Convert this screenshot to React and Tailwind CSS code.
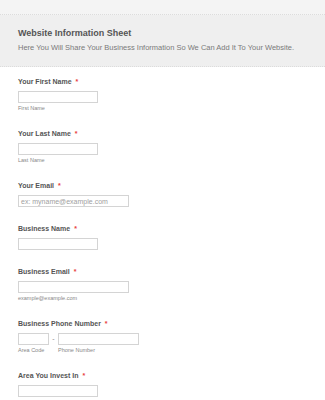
import React from "react";

const fields = [
  { label: "Your First Name", width: "w-[80px]", sub: "First Name" },
  { label: "Your Last Name", width: "w-[80px]", sub: "Last Name" },
  { label: "Your Email", width: "w-[111px]", placeholder: "ex: myname@example.com" },
  { label: "Business Name", width: "w-[80px]" },
  { label: "Business Email", width: "w-[111px]", sub: "example@example.com" },
  { label: "Business Phone Number", phone: true },
  { label: "Area You Invest In", width: "w-[80px]" },
];

function Box({ className, placeholder }) {
  return (
    <div className={`h-[12px] border border-[#d4d4d4] bg-white flex items-center px-[2px] ${className}`}>
      {placeholder && <span className="text-[7px] leading-none text-[#a0a0a0]">{placeholder}</span>}
    </div>
  );
}

export default function App() {
  return (
    <div className="w-[325px] h-[400px] overflow-hidden bg-white font-['Liberation_Sans',Arial,sans-serif]">
      <div className="h-[15px] bg-[#f4f4f4] border-b border-dotted border-[#dcdcdc]" />
      <div className="h-[52px] bg-[#efefef] border-b border-dotted border-[#dcdcdc] px-[18px] pt-[13px]">
        <div className="text-[9px] leading-[11px] font-bold text-[#555]">Website Information Sheet</div>
        <div className="mt-[4px] text-[7.5px] leading-[9px] text-[#7a7a7a]">
          Here You Will Share Your Business Information So We Can Add It To Your Website.
        </div>
      </div>

      <div className="px-[18px] pt-[10px]">
        {fields.map(f => (
          <div key={f.label} className="pb-[17px]">
            <div className="h-[10px] leading-[10px] text-[7px] font-bold text-[#555]">
              {f.label}
              <span className="ml-[4px] text-[#e8413e]">*</span>
            </div>
            {f.phone ? (
              <div className="mt-[4px] flex">
                <div className="flex flex-col">
                  <Box className="w-[31px]" />
                  <span className="mt-[1px] h-[8px] leading-[8px] text-[5.5px] text-[#888]">Area Code</span>
                </div>
                <span className="w-[9px] text-center text-[7px] leading-[12px] text-[#888]">-</span>
                <div className="flex flex-col">
                  <Box className="w-[81px]" />
                  <span className="mt-[1px] h-[8px] leading-[8px] text-[5.5px] text-[#888]">Phone Number</span>
                </div>
              </div>
            ) : (
              <>
                <Box className={`mt-[4px] ${f.width}`} placeholder={f.placeholder} />
                {f.sub && (
                  <div className="mt-[1px] h-[8px] leading-[8px] text-[5.5px] text-[#888]">{f.sub}</div>
                )}
              </>
            )}
          </div>
        ))}
      </div>
    </div>
  );
}
